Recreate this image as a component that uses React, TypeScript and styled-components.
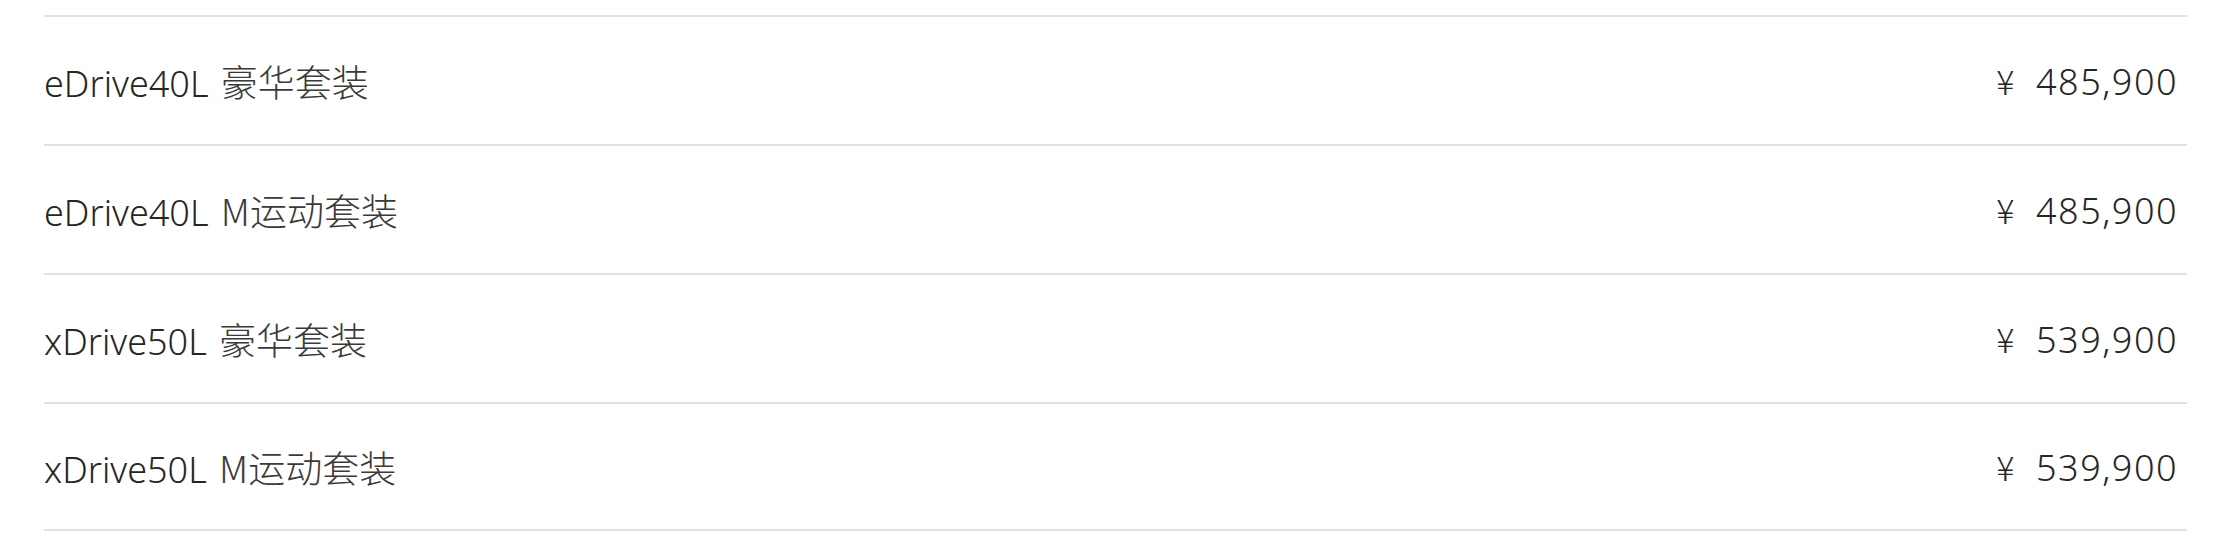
import styled, { createGlobalStyle } from "styled-components";

const GlobalStyle = createGlobalStyle`
  html, body {
    margin: 0;
    padding: 0;
    background: #ffffff;
  }
  body {
    font-family: "Noto Sans", "Noto Sans CJK SC", sans-serif;
  }
`;

const PRICES = [
  { model: "eDrive40L", trim: "豪华套装", price: "485,900" },
  { model: "eDrive40L", trim: "M运动套装", price: "485,900" },
  { model: "xDrive50L", trim: "豪华套装", price: "539,900" },
  { model: "xDrive50L", trim: "M运动套装", price: "539,900" },
];

const App = () => {
  return (
    <>
      <GlobalStyle />
      <PriceList>
        {PRICES.map((item, i) => (
          <Row key={i} $last={i === PRICES.length - 1}>
            <Name>
              {item.model} <Trim>{item.trim}</Trim>
            </Name>
            <Price>
              <Yen>¥</Yen>
              {item.price}
            </Price>
          </Row>
        ))}
      </PriceList>
    </>
  );
};

const PriceList = styled.div`
  padding: 15px 51px 0 44px;
  display: flex;
  flex-direction: column;
`;

const Row = styled.div<{ $last: boolean }>`
  display: flex;
  align-items: center;
  justify-content: space-between;
  padding: 0 9px 0 0;
  box-sizing: border-box;
  height: 129px;
  border-top: 2px solid #e2e2e2;
  border-bottom: ${(p) => (p.$last ? "2px solid #e2e2e2" : "none")};
`;

const Name = styled.span`
  font-size: 36px;
  font-weight: 300;
  color: #262626;
  white-space: nowrap;
`;

const Trim = styled.span`
  font-family: "Noto Sans CJK SC", sans-serif;
  font-size: 37px;
  font-weight: 300;
  margin-left: 3px;
  color: #3a3a3a;
`;

const Price = styled.span`
  font-size: 36px;
  font-weight: 300;
  color: #262626;
  letter-spacing: 1.5px;
  white-space: nowrap;
  display: flex;
  align-items: baseline;
`;

const Yen = styled.span`
  font-family: "Noto Sans CJK SC", sans-serif;
  font-size: 34px;
  font-weight: 300;
  margin-right: 20px;
  color: #262626;
`;

export default App;
